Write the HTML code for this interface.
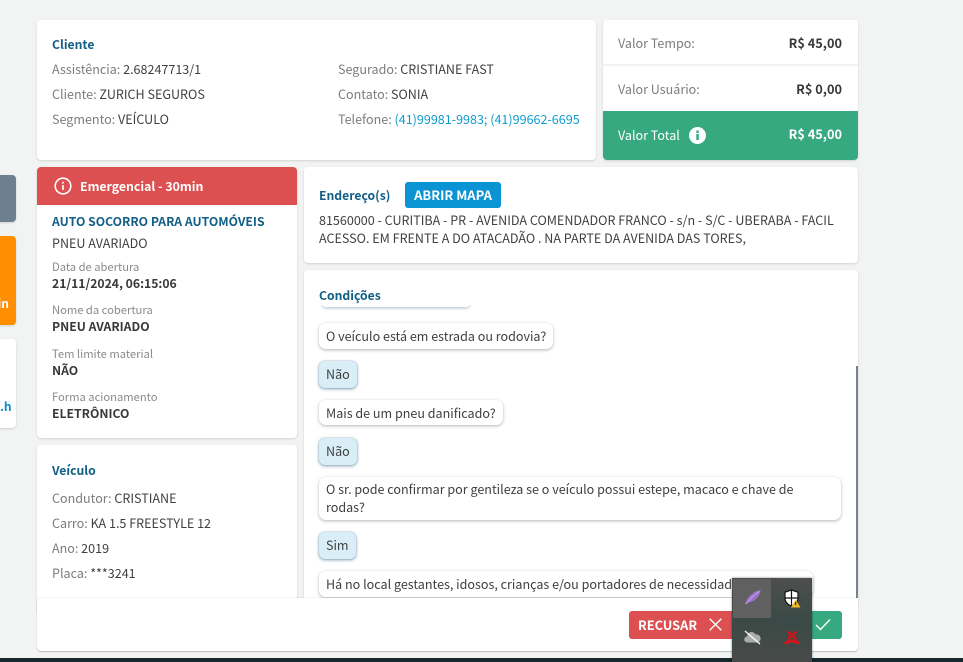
<!DOCTYPE html>
<html lang="pt-BR">
<head>
<meta charset="utf-8">
<title>Atendimento</title>
<style>
html,body{margin:0;padding:0;width:963px;height:662px;overflow:hidden;background:#f2f3f3}
body{position:relative;font-family:"Noto Sans CJK SC","Liberation Sans",sans-serif;font-size:12.55px;color:#3f3f3f}
.c,.t,.b{position:absolute}
.c{background:#fff;border-radius:4px;box-shadow:0 1px 2px rgba(0,0,0,.14)}
.t{white-space:nowrap;line-height:18px}
.g{color:#7d7d7d}
.h{color:#125f85;font-weight:700;font-size:12.2px}
.s{font-weight:700;color:#383838;font-size:12.2px}
.v{font-weight:700;font-size:12.75px}
.l{font-size:11.2px;color:#8a8a8a}
.b{background:#fff;border-radius:7px;box-shadow:0 1px 3px rgba(0,0,0,.3);padding:0 7px;line-height:18px;white-space:nowrap;box-sizing:border-box}
.a{background:#d9eef7;border-radius:6px;box-shadow:0 0 1px rgba(40,90,120,.5),0 1px 3px rgba(40,90,120,.55);height:27px;line-height:26px;padding:0 7px;box-sizing:border-box}
</style>
</head>
<body>
<!-- left edge cards -->
<div class="c" style="left:-10px;top:175px;width:26px;height:47px;background:#6d7f91"></div>
<div class="c" style="left:-10px;top:236px;width:26px;height:89px;background:#ff8f00"></div>
<div class="t" style="left:0;top:295px;width:9px;overflow:hidden;color:#fff;font-weight:700;font-size:12px;direction:rtl">in</div>
<div class="c" style="left:-10px;top:339px;width:26px;height:89px"></div>
<div class="t" style="left:0;top:398px;color:#0a8ec9;font-size:12px;font-weight:700">.h</div>

<!-- Cliente -->
<div class="c" style="left:37px;top:20px;width:559px;height:140px"></div>
<div class="t h" style="left:52px;top:35px">Cliente</div>
<div class="t" style="left:52px;top:60px"><span class="g">Assistência:</span> 2.68247713/1</div>
<div class="t" style="left:52px;top:85px"><span class="g">Cliente:</span> ZURICH SEGUROS</div>
<div class="t" style="left:52px;top:110px"><span class="g">Segmento:</span> VEÍCULO</div>
<div class="t" style="left:338px;top:60px"><span class="g">Segurado:</span> CRISTIANE FAST</div>
<div class="t" style="left:338px;top:85px"><span class="g">Contato:</span> SONIA</div>
<div class="t" style="left:338px;top:110px"><span class="g">Telefone:</span> <span style="color:#0f9ccf">(41)99981-9983; (41)99662-6695</span></div>

<!-- Valores -->
<div class="c" style="left:603px;top:20px;width:255px;height:140px;overflow:hidden">
  <div style="position:absolute;left:0;top:44px;width:255px;height:2px;background:#f2f2f2"></div>
  <div style="position:absolute;left:0;top:91px;width:255px;height:49px;background:#36a980"></div>
</div>
<div class="t g" style="left:618px;top:34px">Valor Tempo:</div>
<div class="t v" style="right:121px;top:34px;color:#383838">R$ 45,00</div>
<div class="t g" style="left:618px;top:80px">Valor Usuário:</div>
<div class="t v" style="right:121px;top:80px;color:#383838">R$ 0,00</div>
<div class="t" style="left:618px;top:126px;color:#fff">Valor Total</div>
<svg class="t" style="left:689px;top:127px" width="17" height="17" viewBox="0 0 17 17"><circle cx="8.5" cy="8.5" r="8.5" fill="#fff"/><rect x="7.3" y="7" width="2.5" height="6" fill="#36a980"/><rect x="7.3" y="3.6" width="2.5" height="2.3" fill="#36a980"/></svg>
<div class="t v" style="right:121px;top:125px;color:#fff">R$ 45,00</div>

<!-- Emergencial -->
<div class="c" style="left:37px;top:167px;width:260px;height:271px;overflow:hidden">
  <div style="height:38px;background:#dd5051"></div>
</div>
<svg class="t" style="left:54px;top:177px" width="18" height="18" viewBox="0 0 18 18" fill="none" stroke="#fff" stroke-width="1.6"><circle cx="9" cy="9" r="7.8"/><path d="M9 8v5M9 4.8v1.8"/></svg>
<div class="t" style="left:80px;top:177px;color:#fff;font-weight:700;font-size:12.3px">Emergencial - 30min</div>
<div class="t h" style="left:52px;top:212px">AUTO SOCORRO PARA AUTOMÓVEIS</div>
<div class="t" style="left:52px;top:234px">PNEU AVARIADO</div>
<div class="t l" style="left:52px;top:258px">Data de abertura</div>
<div class="t s" style="left:52px;top:274px">21/11/2024, 06:15:06</div>
<div class="t l" style="left:52px;top:301px">Nome da cobertura</div>
<div class="t s" style="left:52px;top:317px">PNEU AVARIADO</div>
<div class="t l" style="left:52px;top:345px">Tem limite material</div>
<div class="t s" style="left:52px;top:361px">NÃO</div>
<div class="t l" style="left:52px;top:388px">Forma acionamento</div>
<div class="t s" style="left:52px;top:404px">ELETRÔNICO</div>

<!-- Veículo -->
<div class="c" style="left:37px;top:445px;width:260px;height:170px"></div>
<div class="t h" style="left:52px;top:461px">Veículo</div>
<div class="t" style="left:52px;top:489px"><span class="g">Condutor:</span> CRISTIANE</div>
<div class="t" style="left:52px;top:514px"><span class="g">Carro:</span> KA 1.5 FREESTYLE 12</div>
<div class="t" style="left:52px;top:539px"><span class="g">Ano:</span> 2019</div>
<div class="t" style="left:52px;top:564px"><span class="g">Placa:</span> ***3241</div>

<!-- Endereço -->
<div class="c" style="left:304px;top:167px;width:554px;height:96px"></div>
<div class="t h" style="left:319px;top:186px">Endereço(s)</div>
<div style="position:absolute;left:405px;top:182px;width:96px;height:26px;background:#0b94d3;border-radius:3px;color:#fff;font-weight:700;font-size:13px;line-height:26px;text-align:center">ABRIR MAPA</div>
<div class="t" style="left:319px;top:211px">81560000 - CURITIBA - PR - AVENIDA COMENDADOR FRANCO - s/n - S/C - UBERABA - FACIL</div>
<div class="t" style="left:319px;top:229px">ACESSO. EM FRENTE A DO ATACADÃO . NA PARTE DA AVENIDA DAS TORES,</div>

<!-- Condições -->
<div class="c" style="left:304px;top:270px;width:554px;height:340px"></div>
<div class="t h" style="left:319px;top:286px">Condições</div>
<div style="position:absolute;left:320px;top:305px;width:152px;height:7px;overflow:hidden"><div style="height:4px;margin:-2px 2px 0;background:#fff;border-radius:0 0 7px 7px;box-shadow:0 1px 3px rgba(40,90,120,.4)"></div></div>
<div style="position:absolute;left:856px;top:366px;width:2px;height:232px;background:#76828e"></div>

<div class="b" style="left:319px;top:323px;height:26px;line-height:26px">O veículo está em estrada ou rodovia?</div>
<div class="a" style="position:absolute;left:319px;top:361px">Não</div>
<div class="b" style="left:319px;top:400px;height:25px;line-height:25px">Mais de um pneu danificado?</div>
<div class="a" style="position:absolute;left:319px;top:438px">Não</div>
<div class="b" style="left:319px;top:477px;width:522px;height:43px;padding-top:3px">O sr. pode confirmar por gentileza se o veículo possui estepe, macaco e chave de<br>rodas?</div>
<div class="a" style="position:absolute;left:319px;top:532px">Sim</div>
<div class="b" style="left:319px;top:571px;width:494px;height:26px;line-height:26px;overflow:hidden">Há no local gestantes, idosos, crianças e/ou portadores de necessidades especiais?</div>

<!-- Rodapé -->
<div class="c" style="left:37px;top:598px;width:821px;height:53px;box-shadow:0 1px 1px rgba(0,0,0,.22),0 -1px 1px rgba(0,0,0,.05)"></div>
<div style="position:absolute;left:629px;top:611px;width:110px;height:28px;background:#dd5051;border-radius:3px"></div>
<div class="t" style="left:638px;top:616px;color:#fff;font-weight:700;font-size:12.8px">RECUSAR</div>
<svg class="t" style="left:709px;top:618px" width="13" height="13" viewBox="0 0 13 13" stroke="#fff" stroke-width="1.4" fill="none"><path d="M.7.7l11.6 11.6M12.3.7L.7 12.3"/></svg>
<div style="position:absolute;left:800px;top:611px;width:42px;height:28px;background:#36a980;border-radius:3px"></div>
<svg class="t" style="left:815px;top:618px" width="16" height="13" viewBox="0 0 16 13" stroke="#fff" stroke-width="1.4" fill="none"><path d="M1 7l4.5 4.5L15 1.5"/></svg>

<!-- barra de tarefas -->
<div style="position:absolute;left:0;top:658px;width:963px;height:4px;background:#17282c"></div>

<!-- bandeja do sistema -->
<div style="position:absolute;left:732px;top:578px;width:80px;height:84px;background:linear-gradient(#4d4f4e,#3a4a46 50%,#484a49);box-shadow:0 0 2px rgba(0,0,0,.5)"></div>
<div style="position:absolute;left:733px;top:579px;width:38px;height:39px;background:#5f605f"></div>
<svg class="t" style="left:744px;top:589px" width="18" height="17" viewBox="0 0 18 17"><path d="M1 16C2 9 9 2 16.5 1 16.5 7 11 13 4 13.5L1 16z" fill="#9a72c8"/><path d="M2 15C6 10 10 6 15 2.5" stroke="#c6a8e4" stroke-width=".9" fill="none"/></svg>
<svg class="t" style="left:784px;top:589px" width="17" height="19" viewBox="0 0 17 19"><path d="M7.5 1L14 3.2V9c0 4-3 7-6.5 8C4 16 1 13 1 9V3.2L7.5 1z" fill="#fff" stroke="#111" stroke-width="1.2"/><path d="M7.5 1v16M1 9h13" stroke="#111" stroke-width="1.2"/><path d="M11.7 10.5l4.8 8h-9.6z" fill="#f2b824"/><path d="M11.7 13v3" stroke="#111" stroke-width="1"/></svg>
<svg class="t" style="left:744px;top:630px" width="17" height="15" viewBox="0 0 17 15"><path d="M3.5 12.5A3 3 0 0 1 3 6.5 4.5 4.5 0 0 1 11.5 4.5 3.5 3.5 0 0 1 13.5 12.5z" fill="#a9adab"/><path d="M1 1l15 13" stroke="#fff" stroke-width="1.2"/></svg>
<svg class="t" style="left:784px;top:630px" width="16" height="16" viewBox="0 0 16 16" fill="none" stroke="#d3141a"><path d="M3.5 1.5L12.5 9M12.5 1.5L3.5 9" stroke-width="2.4"/><path d="M1.5 14C3 10 13 10 14.5 14" stroke-width="3.2"/></svg>
</body>
</html>
